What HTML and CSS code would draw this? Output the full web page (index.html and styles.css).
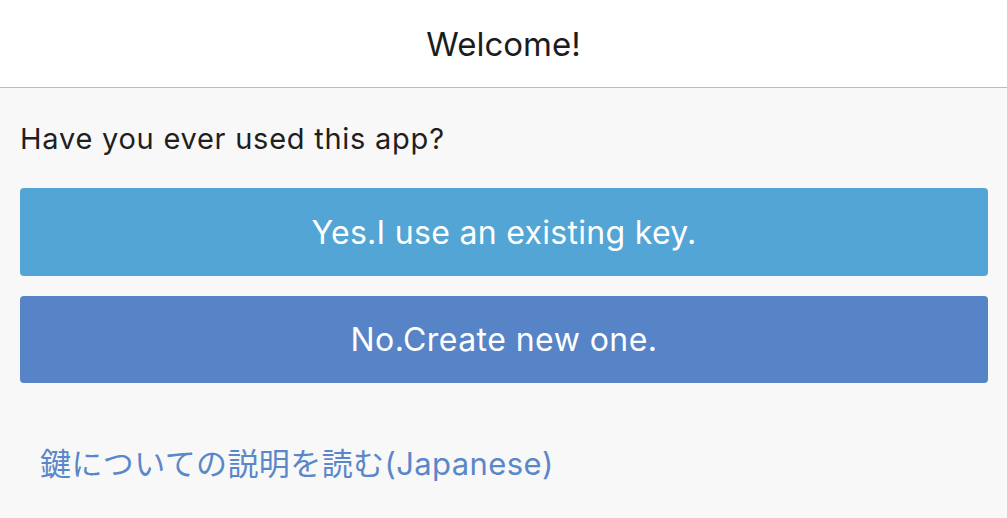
FILE: index.html
```html
<!DOCTYPE html>
<html lang="en">
<head>
<meta charset="utf-8">
<title>Welcome</title>
<link rel="stylesheet" href="styles.css">
</head>
<body>
<header class="nav">
  <h1 class="nav-title">Welcome!</h1>
</header>
<main class="content">
  <p class="question">Have you ever used this app?</p>
  <div class="actions">
    <button class="btn btn-existing">Yes.I use an existing key.</button>
    <button class="btn btn-new">No.Create new one.</button>
  </div>
  <a class="help-link" href="#">鍵についての説明を読む(Japanese)</a>
</main>
</body>
</html>
```

FILE: styles.css
```css
html, body {
  margin: 0;
  padding: 0;
  height: 100%;
}
body {
  background: #f8f8f8;
  font-family: Inter, "Noto Sans CJK JP", sans-serif;
  color: #1f1f1f;
}
.nav {
  height: 87px;
  background: #ffffff;
  border-bottom: 1px solid #bcbcbc;
  display: flex;
  align-items: center;
  justify-content: center;
}
.nav-title {
  margin: 0;
  font-size: 33px;
  font-weight: 400;
  color: #1c1c1c;
}
.content {
  padding: 0 19px 0 20px;
}
.question {
  margin: 0;
  padding-top: 34px;
  font-size: 29px;
  line-height: 34px;
  letter-spacing: 0.75px;
  color: #1f1f1f;
}
.actions {
  display: flex;
  flex-direction: column;
  gap: 20px;
  margin-top: 32px;
}
.btn {
  display: block;
  width: 100%;
  height: 88px;
  border: none;
  border-radius: 4px;
  color: #ffffff;
  font-family: Inter, sans-serif;
  font-size: 32px;
  font-weight: 400;
  padding: 0;
}
.btn-existing {
  background: #52a5d5;
  letter-spacing: 0.3px;
}
.btn-new {
  background: #5684c6;
  height: 87px;
  letter-spacing: 0.45px;
}
.help-link {
  display: block;
  margin-top: 64px;
  padding-left: 20px;
  font-size: 31px;
  line-height: 34px;
  letter-spacing: 0.4px;
  color: #5a87c9;
  text-decoration: none;
}
```
